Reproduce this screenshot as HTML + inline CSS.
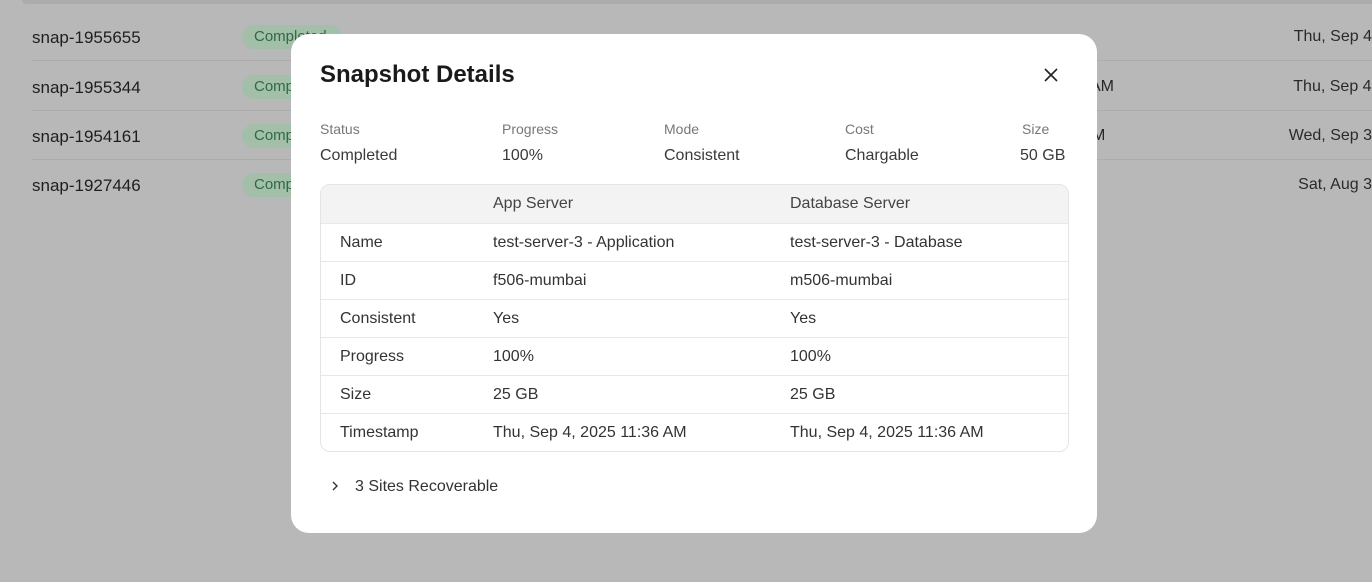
<!DOCTYPE html>
<html><head><meta charset="utf-8"><style>
*{box-sizing:border-box;margin:0;padding:0}
body{width:1372px;height:582px;overflow:hidden;background:#b8b8b8;font-family:"Liberation Sans",sans-serif;position:relative;color:#262626}
.top{position:absolute;left:22px;right:0;top:0;height:4px;background:#acacac;border-radius:0 0 0 6px}
.row{position:absolute;left:32px;right:0;height:49px;border-bottom:1px solid #acacac}
.row .n{position:absolute;left:0;top:16px;font-size:17px;color:#1e1e1e}
.row .b{position:absolute;left:210px;top:13px;height:24px;width:100px;border-radius:12px;background:#a3bfa9;color:#2e6a43;font-size:15px;padding:3px 12px}
.row .d{position:absolute;right:0;top:16px;font-size:16px;color:#2a2a2a;white-space:nowrap}
.modal{position:absolute;left:291px;top:34px;width:806px;height:499px;background:#fff;border-radius:18px}
h1{position:absolute;left:29px;top:27px;font-size:24px;font-weight:600;color:#1a1a1a}
.x{position:absolute;left:752px;top:33px}
.lab{position:absolute;top:87px;font-size:14px;color:#777}
.val{position:absolute;top:113px;font-size:16px;color:#3a3a3a}
table{position:absolute;left:29px;top:150px;width:749px;border:1px solid #e4e4e4;border-radius:10px;border-collapse:separate;border-spacing:0;overflow:hidden;font-size:16px;color:#333}
td,th{height:38px;padding:0 0 0 19px;text-align:left;font-weight:normal;border-top:1px solid #e8e8e8}
th{background:#f3f3f3;border-top:none;color:#444}
tr td:first-child,tr th:first-child{width:153px}
tr td:nth-child(2),tr th:nth-child(2){width:297px}
.exp{position:absolute;left:38px;top:444px;font-size:16px;color:#333}
</style></head><body>
<div class="top"></div>
<div class="row" style="top:12px"><span class="n">snap-1955655</span><span class="b">Completed</span><span class="d">Thu, Sep 4</span></div>
<div class="row" style="top:62px"><span class="n">snap-1955344</span><span class="b">Completed</span><span class="d" style="right:-4px">Thu, Sep 4,</span></div>
<div class="row" style="top:111px"><span class="n">snap-1954161</span><span class="b">Completed</span><span class="d">Wed, Sep 3</span><span style="position:absolute;left:1060px;top:16px;font-size:16px">M</span></div>
<div class="row" style="top:160px;border:none"><span class="n">snap-1927446</span><span class="b">Completed</span><span class="d">Sat, Aug 3</span></div>
<span style="position:absolute;left:1090px;top:78px;font-size:16px">AM</span>
<div class="modal">
<h1>Snapshot Details</h1>
<svg class="x" width="16" height="16" viewBox="0 0 16 16"><path d="M2 2L14 14M14 2L2 14" stroke="#222" stroke-width="1.6" fill="none"/></svg>
<div class="lab" style="left:29px">Status</div><div class="val" style="left:29px">Completed</div>
<div class="lab" style="left:211px">Progress</div><div class="val" style="left:211px">100%</div>
<div class="lab" style="left:373px">Mode</div><div class="val" style="left:373px">Consistent</div>
<div class="lab" style="left:554px">Cost</div><div class="val" style="left:554px">Chargable</div>
<div class="lab" style="left:731px">Size</div><div class="val" style="left:729px">50 GB</div>
<table>
<tr><th></th><th>App Server</th><th>Database Server</th></tr>
<tr><td>Name</td><td>test-server-3 - Application</td><td>test-server-3 - Database</td></tr>
<tr><td>ID</td><td>f506-mumbai</td><td>m506-mumbai</td></tr>
<tr><td>Consistent</td><td>Yes</td><td>Yes</td></tr>
<tr><td>Progress</td><td>100%</td><td>100%</td></tr>
<tr><td>Size</td><td>25 GB</td><td>25 GB</td></tr>
<tr><td>Timestamp</td><td>Thu, Sep 4, 2025 11:36 AM</td><td>Thu, Sep 4, 2025 11:36 AM</td></tr>
</table>
<div class="exp"><svg width="12" height="12" viewBox="0 0 12 12" style="vertical-align:-1px;margin-right:14px"><path d="M4 2L8 6L4 10" stroke="#333" stroke-width="1.4" fill="none"/></svg>3 Sites Recoverable</div>
</div>
</body></html>
